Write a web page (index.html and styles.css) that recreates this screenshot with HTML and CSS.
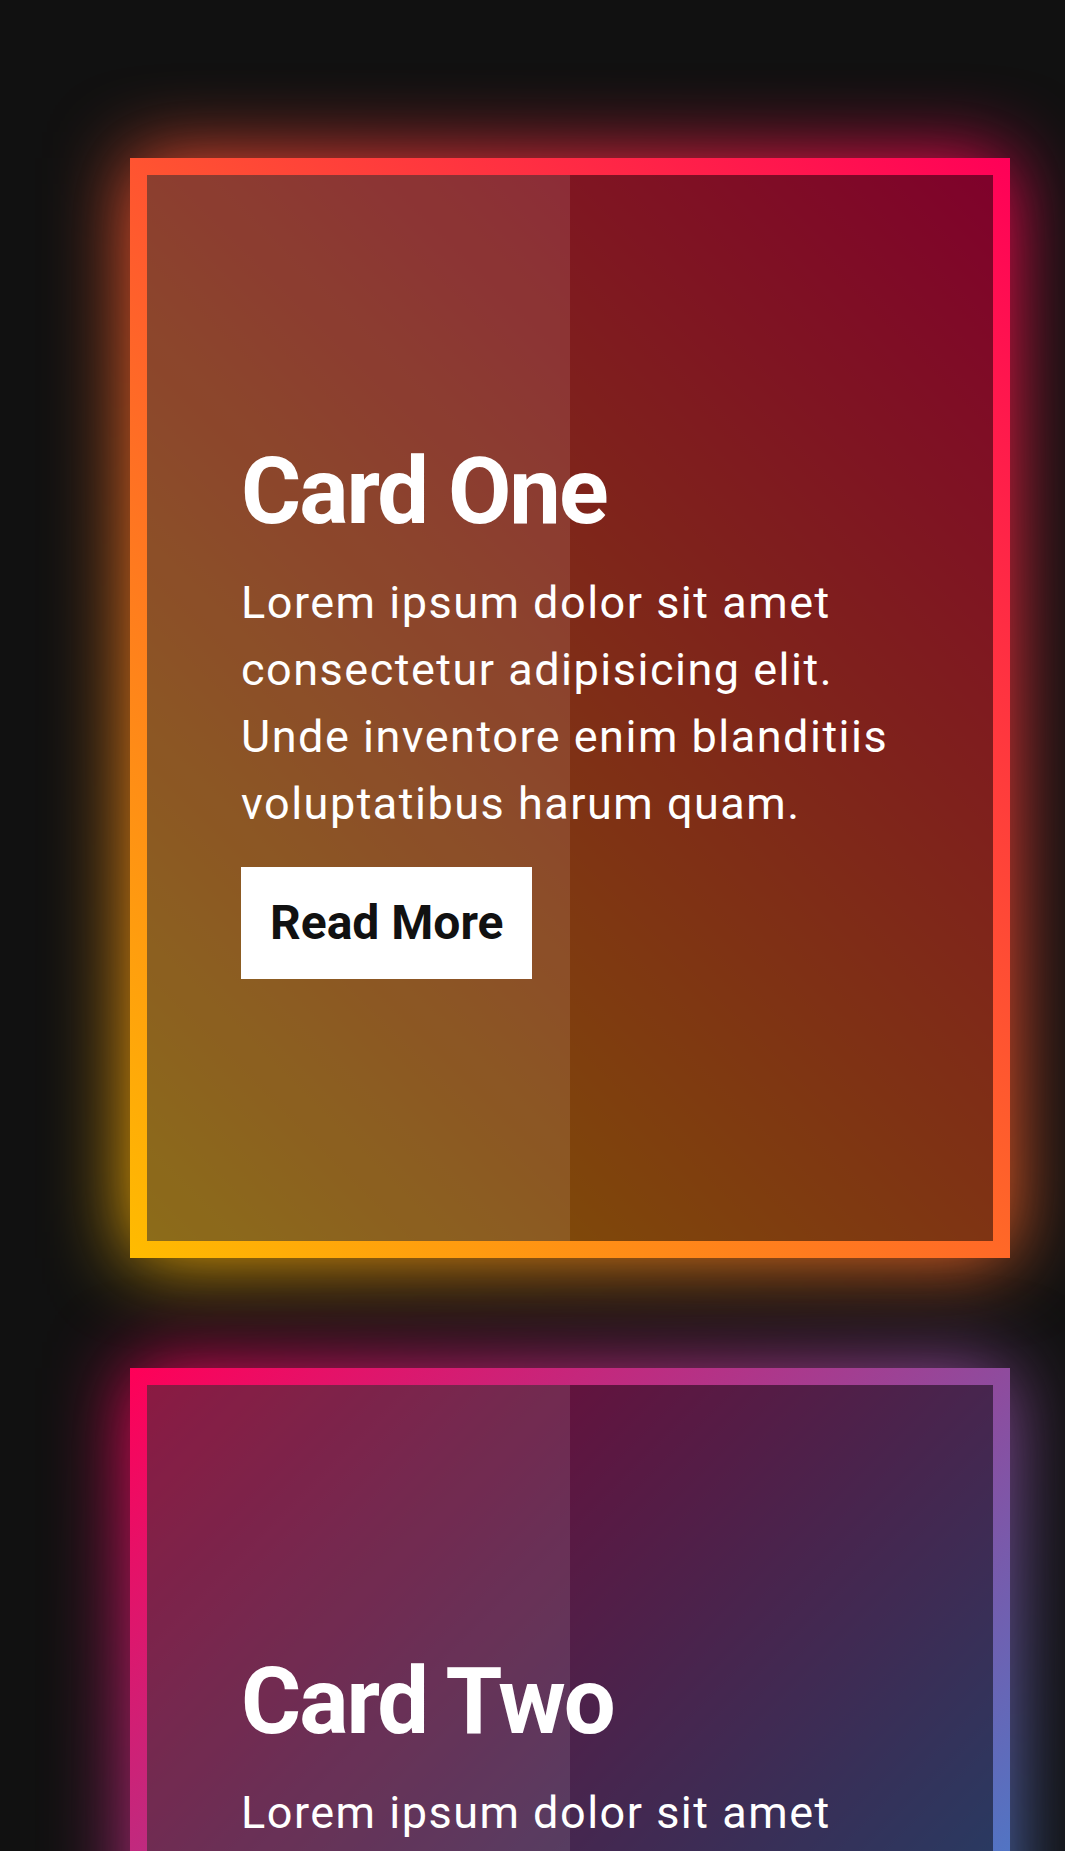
FILE: index.html
```html
<!DOCTYPE html>
<html lang="en">
<head>
<meta charset="utf-8">
<title>Glowing Cards</title>
<link rel="stylesheet" href="styles.css">
</head>
<body>
  <div class="container">
    <div class="card card-one">
      <span class="glass">
        <div class="content">
          <h2>Card One</h2>
          <p>Lorem ipsum dolor sit amet consectetur adipisicing elit. Unde inventore enim blanditiis voluptatibus harum quam.</p>
          <a class="btn" href="#">Read More</a>
        </div>
      </span>
    </div>
    <div class="card card-two">
      <span class="glass">
        <div class="content">
          <h2>Card Two</h2>
          <p>Lorem ipsum dolor sit amet consectetur adipisicing elit. Unde inventore enim blanditiis voluptatibus harum quam.</p>
          <a class="btn" href="#">Read More</a>
        </div>
      </span>
    </div>
  </div>
</body>
</html>
```

FILE: styles.css
```css
* {
  box-sizing: border-box;
}

html, body {
  margin: 0;
  padding: 0;
  background: #111111;
  font-family: Roboto, "Liberation Sans", sans-serif;
}

.container {
  display: flex;
  flex-direction: column;
  gap: 110px;
  padding: 158px 55px 100px 130px;
}

.card {
  position: relative;
  isolation: isolate;
  width: 880px;
  height: 1100px;
  flex: none;
}

.card::before,
.card::after {
  content: "";
  position: absolute;
  inset: 0;
}

.card::after {
  z-index: -1;
  filter: blur(40px);
}

.card-one::before,
.card-one::after {
  background: linear-gradient(45deg, #ffbc00, #ff0058);
}

.card-two::before,
.card-two::after {
  background: linear-gradient(135deg, #ff0058, #03a9f4);
}

.glass {
  position: absolute;
  top: 17px;
  left: 17px;
  right: 17px;
  bottom: 17px;
  z-index: 2;
  background: rgba(0, 0, 0, 0.5);
  display: flex;
  align-items: center;
}

.glass::before {
  content: "";
  position: absolute;
  top: 0;
  left: 0;
  width: 50%;
  height: 100%;
  background: rgba(255, 255, 255, 0.1);
}

.content {
  position: relative;
  z-index: 3;
  padding: 0 94px;
  width: 100%;
  color: #ffffff;
}

.content h2 {
  margin: 0 0 24px 0;
  font-size: 92px;
  font-weight: 700;
  line-height: normal;
  letter-spacing: -2px;
}

.content p {
  margin: 0 0 30px 0;
  font-size: 45px;
  line-height: 67px;
  font-weight: 400;
  letter-spacing: 1.5px;
}

.btn {
  display: inline-block;
  padding: 0 29px;
  height: 112px;
  line-height: 112px;
  background: #ffffff;
  color: #111111;
  font-size: 48px;
  font-weight: 700;
  text-decoration: none;
}
```
